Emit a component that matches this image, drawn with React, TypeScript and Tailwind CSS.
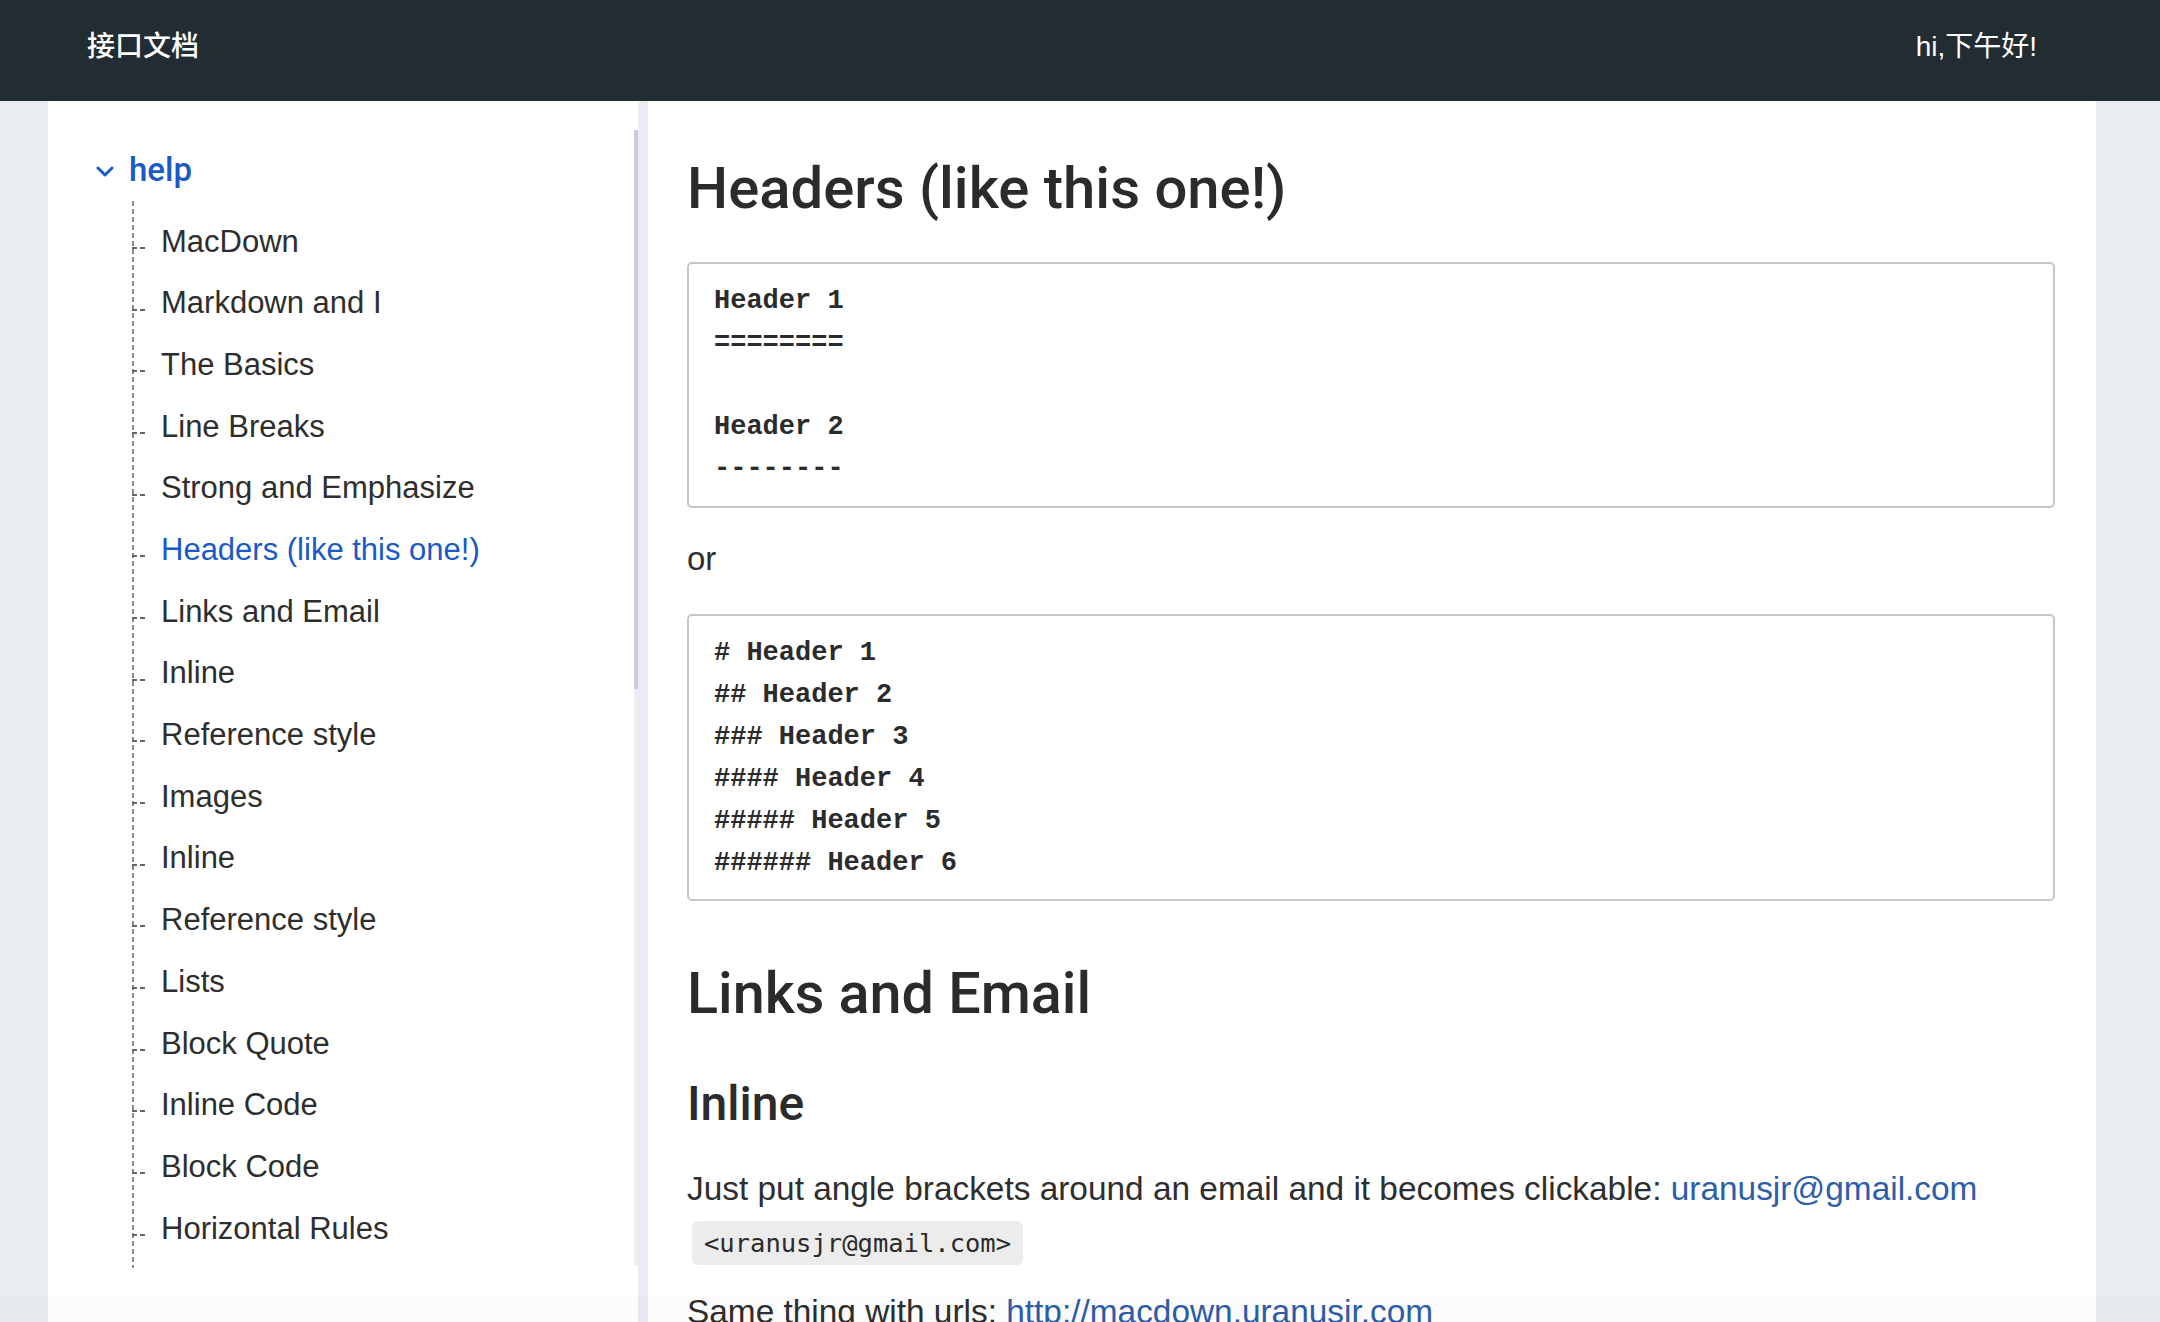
import React from "react";

const items = [
  "MacDown",
  "Markdown and I",
  "The Basics",
  "Line Breaks",
  "Strong and Emphasize",
  "Headers (like this one!)",
  "Links and Email",
  "Inline",
  "Reference style",
  "Images",
  "Inline",
  "Reference style",
  "Lists",
  "Block Quote",
  "Inline Code",
  "Block Code",
  "Horizontal Rules",
];

export default function App() {
  return (
    <div className="relative h-[1322px] overflow-hidden bg-[#e9edf1] font-['Liberation_Sans','Noto_Sans_CJK_SC',sans-serif] text-[#2e2e2e]">
      <header className="h-[101px] bg-[#222c33] flex items-center justify-between pl-[87px] pr-[123px] pb-[8px] text-white">
        <div className="text-[28px] font-medium">接口文档</div>
        <div className="text-[28px]">hi,下午好!</div>
      </header>
      <div className="flex h-[1221px] pl-[48px]">
        <aside className="w-[590px] bg-white flex flex-col">
          <div className="mt-[29px] h-[1135px] flex">
            <div className="flex-1 pt-[9px]">
              <div className="h-[62px] flex items-center pl-[48px] text-[#1a5ac6]">
                <svg width="18" height="12" viewBox="0 0 18 12" className="mt-[4px]">
                  <polyline points="2,2 9,9 16,2" fill="none" stroke="#1a5ac6" strokeWidth="3" strokeLinecap="round" strokeLinejoin="round" />
                </svg>
                <span className="ml-[15px] text-[33px] font-['Roboto','Liberation_Sans',sans-serif] font-medium">help</span>
              </div>
              <div className="ml-[84px] pt-[10px] pb-[8px] bg-[linear-gradient(to_bottom,#8a8a8a_62%,transparent_62%)] bg-[length:2px_8px] bg-repeat-y bg-left-top">
                {items.map((t, i) => (
                  <div key={i} className="h-[61.7px] flex items-center">
                    <div className="w-[16px] h-[2px] translate-y-[6px] bg-[linear-gradient(to_right,#666666_62%,transparent_62%)] bg-[length:8px_2px] bg-repeat-x" />
                    <span className={"ml-[13px] text-[31px] " + (i === 5 ? "text-[#1a5ac6]" : "text-[#2e2e2e]")}>{t}</span>
                  </div>
                ))}
              </div>
            </div>
            <div className="w-[4px] bg-[#eceef3] flex flex-col">
              <div className="h-[559px] bg-[#cbcbe0]" />
            </div>
          </div>
        </aside>
        <main className="ml-[10px] w-[1448px] bg-white pl-[39px] pr-[41px] flex flex-col">
          <h2 className="mt-[52px] text-[58px] leading-[70px] font-['Roboto','Liberation_Sans',sans-serif] font-medium text-[#2b2b2b]">Headers (like this one!)</h2>
          <pre className="mt-[39px] border-2 border-[#c6c6c6] rounded-[5px] pl-[25px] py-[16px] font-['Liberation_Mono',monospace] font-bold text-[27px] leading-[42px] text-[#2b2b2b]">
{`Header 1
========

Header 2
--------`}
          </pre>
          <p className="mt-[28px] text-[33px] leading-[46px]">or</p>
          <pre className="mt-[32px] border-2 border-[#c6c6c6] rounded-[5px] pl-[25px] py-[15.5px] font-['Liberation_Mono',monospace] font-bold text-[27px] leading-[42px] text-[#2b2b2b]">
{`# Header 1
## Header 2
### Header 3
#### Header 4
##### Header 5
###### Header 6`}
          </pre>
          <h2 className="mt-[58px] text-[57.5px] leading-[70px] font-['Roboto','Liberation_Sans',sans-serif] font-medium text-[#2b2b2b]">Links and Email</h2>
          <h3 className="mt-[47px] text-[48px] leading-[56px] font-['Roboto','Liberation_Sans',sans-serif] font-medium text-[#2b2b2b]">Inline</h3>
          <p className="mt-[31px] text-[33.4px] leading-[52px]">
            Just put angle brackets around an email and it becomes clickable:{" "}
            <a className="text-[#2d5ea8]">uranusjr@gmail.com</a>
            <br />
            <code className="ml-[5px] bg-[#ececec] rounded-[6px] px-[12px] py-[7px] font-['DejaVu_Sans_Mono',monospace] text-[25.5px] text-[#2b2b2b]">&lt;uranusjr@gmail.com&gt;</code>
          </p>
          <p className="mt-[17px] text-[33.4px] leading-[52px]">
            Same thing with urls:{" "}
            <a className="text-[#2d5ea8] underline">http://macdown.uranusjr.com</a>
          </p>
        </main>
      </div>
      <div className="absolute left-0 right-0 bottom-0 h-[25px] bg-black/[0.015]" />
    </div>
  );
}
